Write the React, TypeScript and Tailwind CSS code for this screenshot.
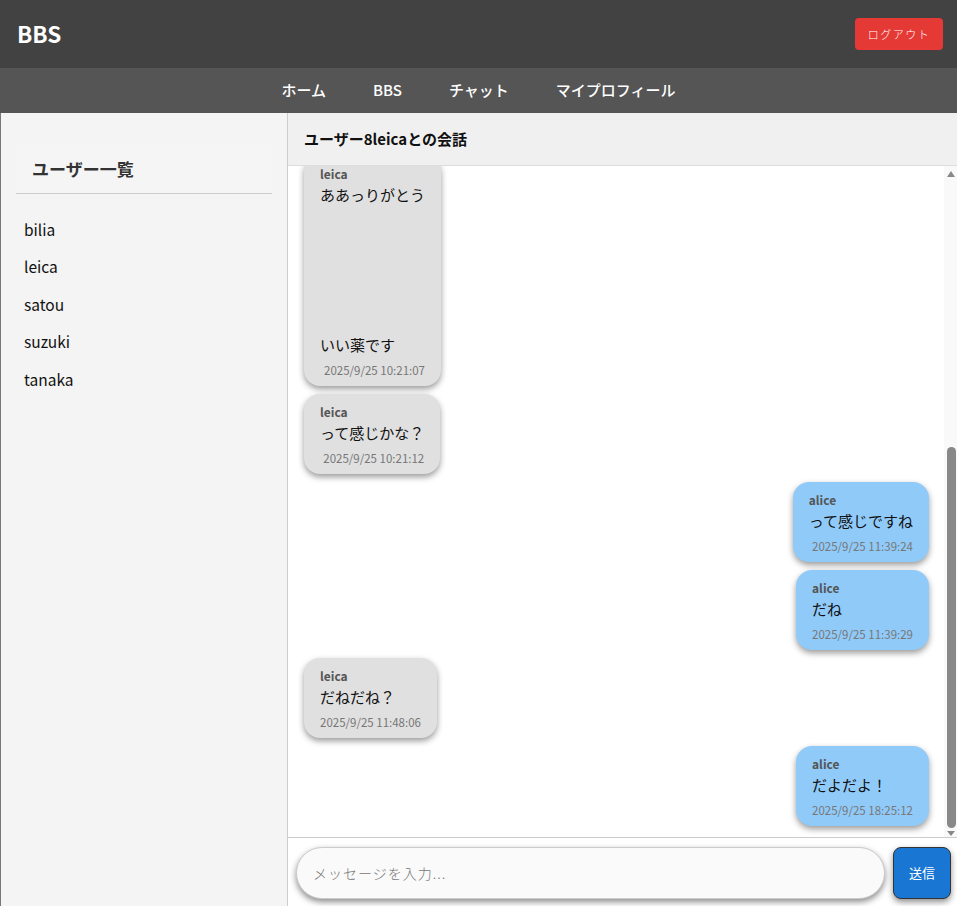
import React, { useEffect, useRef } from "react";

type Msg = { user: string; text: string; time: string };

const messages: Msg[] = [
  { user: "alice", text: "こんにちは", time: "2025/9/25 10:15:02" },
  { user: "leica", text: "こんにちは！", time: "2025/9/25 10:16:40" },
  { user: "alice", text: "体調はどう？", time: "2025/9/25 10:18:11" },
  { user: "leica", text: "だいぶ良くなったよ", time: "2025/9/25 10:19:35" },
  { user: "alice", text: "よかった！", time: "2025/9/25 10:20:21" },
  { user: "leica", text: "ああっりがとう\n\n\n\n\n\nいい薬です", time: "2025/9/25 10:21:07" },
  { user: "leica", text: "って感じかな？", time: "2025/9/25 10:21:12" },
  { user: "alice", text: "って感じですね", time: "2025/9/25 11:39:24" },
  { user: "alice", text: "だね", time: "2025/9/25 11:39:29" },
  { user: "leica", text: "だねだね？", time: "2025/9/25 11:48:06" },
  { user: "alice", text: "だよだよ！", time: "2025/9/25 18:25:12" },
];

const users = ["bilia", "leica", "satou", "suzuki", "tanaka"];

function Bubble({ m }: { m: Msg }) {
  const mine = m.user === "alice";
  return (
    <div
      className={
        mine
          ? "self-end max-w-[70%] shrink-0 rounded-[16px] bg-[#90caf9] px-4 pt-[9px] pb-[7px] shadow-[0_3px_6px_rgba(0,0,0,0.4)]"
          : "self-start max-w-[70%] shrink-0 rounded-[16px] bg-[#e0e0e0] px-4 pt-[9px] pb-[7px] shadow-[0_3px_6px_rgba(0,0,0,0.4)]"
      }
    >
      <div className="text-[12px] leading-[17px] font-bold text-[#555]">{m.user}</div>
      <div className="text-[15px] leading-[25px] text-[#111] whitespace-pre-wrap">{m.text}</div>
      <div className="mt-[5px] text-right text-[11.5px] leading-[17px] text-[#777]">{m.time}</div>
    </div>
  );
}

export default function App() {
  const ref = useRef<HTMLDivElement>(null);
  useEffect(() => {
    if (ref.current) ref.current.scrollTop = ref.current.scrollHeight;
  }, []);

  return (
    <div
      className="flex h-[906px] w-full flex-col overflow-hidden bg-white"
      style={{ fontFamily: '"Noto Sans CJK JP", "Noto Sans", sans-serif' }}
    >
      <header className="flex h-[68px] shrink-0 items-center justify-between bg-[#424242] pl-[17px] pr-[14px]">
        <div className="text-[22.5px] font-bold text-white">BBS</div>
        <button className="h-[32px] w-[88px] rounded-[4px] bg-[#e53935] text-[11px] font-light tracking-[1.5px] text-white">
          ログアウト
        </button>
      </header>
      <nav className="flex h-[45px] shrink-0 items-center justify-center gap-[47px] bg-[#555555] text-[15px] font-medium text-white">
        <span>ホーム</span>
        <span>BBS</span>
        <span>チャット</span>
        <span>マイプロフィール</span>
      </nav>
      <div className="flex min-h-0 flex-1">
        <aside className="w-[288px] shrink-0 border-l border-r border-l-[#777] border-r-[#cccccc] bg-[#f4f4f4] pl-[15px] pr-[15px] pt-8">
          <div className="border-b border-[#cccccc] bg-[#f5f5f5] px-4 py-3 text-[17px] leading-[24px] font-bold text-[#333]">
            ユーザー一覧
          </div>
          <ul className="mt-[17px]">
            {users.map((u) => (
              <li key={u} className="flex h-[37.4px] items-center pl-[8px] text-[15.5px] text-[#111]">
                {u}
              </li>
            ))}
          </ul>
        </aside>
        <section className="flex min-w-0 flex-1 flex-col">
          <div className="flex h-[53px] shrink-0 items-center border-b border-[#dddddd] bg-[#f0f0f0] px-4 text-[15px] font-bold text-[#111]">
            ユーザー8leicaとの会話
          </div>
          <div className="relative min-h-0 flex-1">
            <div
              ref={ref}
              className="flex h-full flex-col gap-2 overflow-y-auto pl-4 pr-[28px] pt-4 pb-[11px] [scrollbar-width:none]"
            >
              {messages.map((m, i) => (
                <Bubble key={i} m={m} />
              ))}
            </div>
            <div className="pointer-events-none absolute top-0 right-0 bottom-0 w-[13px] bg-[#f9f9f9]">
              <div className="absolute top-[5px] left-[3px] h-0 w-0 border-x-[4px] border-b-[6px] border-x-transparent border-b-[#888]" />
              <div className="absolute top-[281px] bottom-[9px] left-[3px] w-[9px] rounded-[5px] bg-[#888]" />
              <div className="absolute bottom-[1px] left-[3px] h-0 w-0 border-x-[4px] border-t-[5px] border-x-transparent border-t-[#888]" />
            </div>
          </div>
          <div className="flex h-[69px] shrink-0 gap-2 border-t border-[#cccccc] bg-white pl-2 pr-[6px] pt-[9px] pb-[7px]">
            <input
              className="h-[52px] flex-1 rounded-full border border-[#cccccc] bg-[#fafafa] px-4 text-[14px] font-light tracking-[1px] text-[#333] shadow-[0_3px_6px_rgba(0,0,0,0.45)] outline-none placeholder:text-[#777]"
              placeholder="メッセージを入力..."
            />
            <button className="h-[52px] w-[58px] shrink-0 rounded-[8px] border border-[#333] bg-[#1976d2] text-[13px] text-white shadow-[0_3px_6px_rgba(0,0,0,0.45)]">
              送信
            </button>
          </div>
        </section>
      </div>
    </div>
  );
}
